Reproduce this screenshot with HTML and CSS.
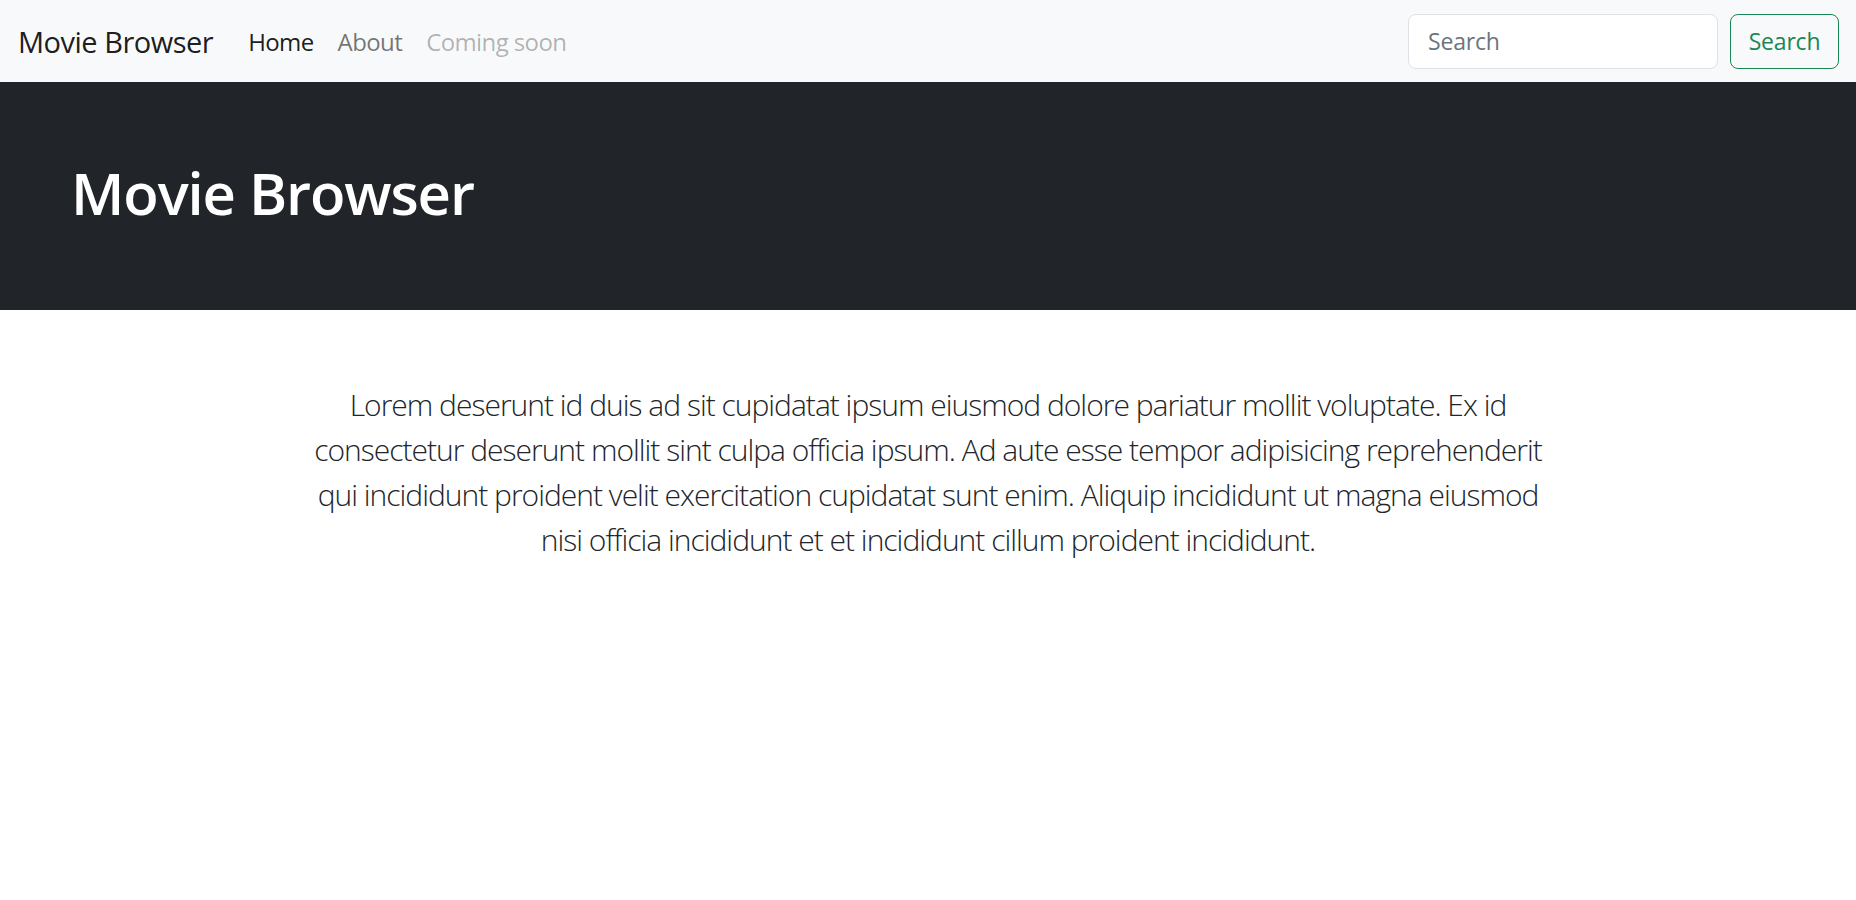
FILE: index.html
```html
<!DOCTYPE html>
<html lang="en">
<head>
<meta charset="utf-8">
<title>Movie Browser</title>
<link rel="stylesheet" href="styles.css">
</head>
<body>
<nav class="navbar">
  <a class="brand" href="#">Movie Browser</a>
  <ul class="nav-links">
    <li><a class="nav-link active" href="#">Home</a></li>
    <li><a class="nav-link" href="#">About</a></li>
    <li><a class="nav-link disabled" href="#">Coming soon</a></li>
  </ul>
  <form class="search-form">
    <input class="search-input" type="search" placeholder="Search">
    <button class="search-btn" type="button">Search</button>
  </form>
</nav>
<header class="hero">
  <h1 class="hero-title">Movie Browser</h1>
</header>
<main class="content">
  <p class="lead">Lorem deserunt id duis ad sit cupidatat ipsum eiusmod dolore pariatur mollit voluptate. Ex id consectetur deserunt mollit sint culpa officia ipsum. Ad aute esse tempor adipisicing reprehenderit qui incididunt proident velit exercitation cupidatat sunt enim. Aliquip incididunt ut magna eiusmod nisi officia incididunt et et incididunt cillum proident incididunt.</p>
</main>
</body>
</html>
```
FILE: styles.css
```css
* { box-sizing: border-box; }
body {
  margin: 0;
  font-family: "Open Sans", "Noto Sans", sans-serif;
  color: #212529;
  background: #fff;
}
.navbar {
  display: flex;
  align-items: center;
  height: 82px;
  padding: 0 17px 0 18px;
  background: #f8f9fa;
}
.brand {
  font-size: 29px;
  letter-spacing: -0.5px;
  color: rgba(0,0,0,.9);
  text-decoration: none;
  margin-right: 23px;
}
.nav-links {
  display: flex;
  list-style: none;
  margin: 0;
  padding: 0;
  flex: 1;
}
.nav-link {
  display: block;
  padding: 0 12px;
  font-size: 24px;
  letter-spacing: -0.6px;
  color: rgba(0,0,0,.55);
  text-decoration: none;
}
.nav-link.active { color: rgba(0,0,0,.9); }
.nav-link.disabled { color: rgba(0,0,0,.3); }
.search-form {
  display: flex;
  gap: 12px;
}
.search-input {
  width: 310px;
  height: 55px;
  padding: 0 19px;
  font: inherit;
  font-size: 23px;
  letter-spacing: -0.2px;
  color: #212529;
  background: #fff;
  border: 1px solid #dee2e6;
  border-radius: 8px;
}
.search-input::placeholder { color: #6c757d; }
.search-btn {
  width: 109px;
  height: 55px;
  padding: 0;
  font: inherit;
  font-size: 23px;
  letter-spacing: -0.2px;
  color: #198754;
  background: transparent;
  border: 1.5px solid #198754;
  border-radius: 8px;
}
.hero {
  background: #212529;
  padding: 75px 71px 69px;
}
.hero-title {
  margin: 0 0 12px;
  font-size: 58px;
  letter-spacing: -1.1px;
  line-height: 72px;
  font-weight: 600;
  color: #fff;
}
.content {
  max-width: 1250px;
  margin: 72px auto 0;
}
.lead {
  margin: 0;
  font-size: 30px;
  font-weight: 300;
  letter-spacing: -1px;
  line-height: 45px;
  text-align: center;
}
```
